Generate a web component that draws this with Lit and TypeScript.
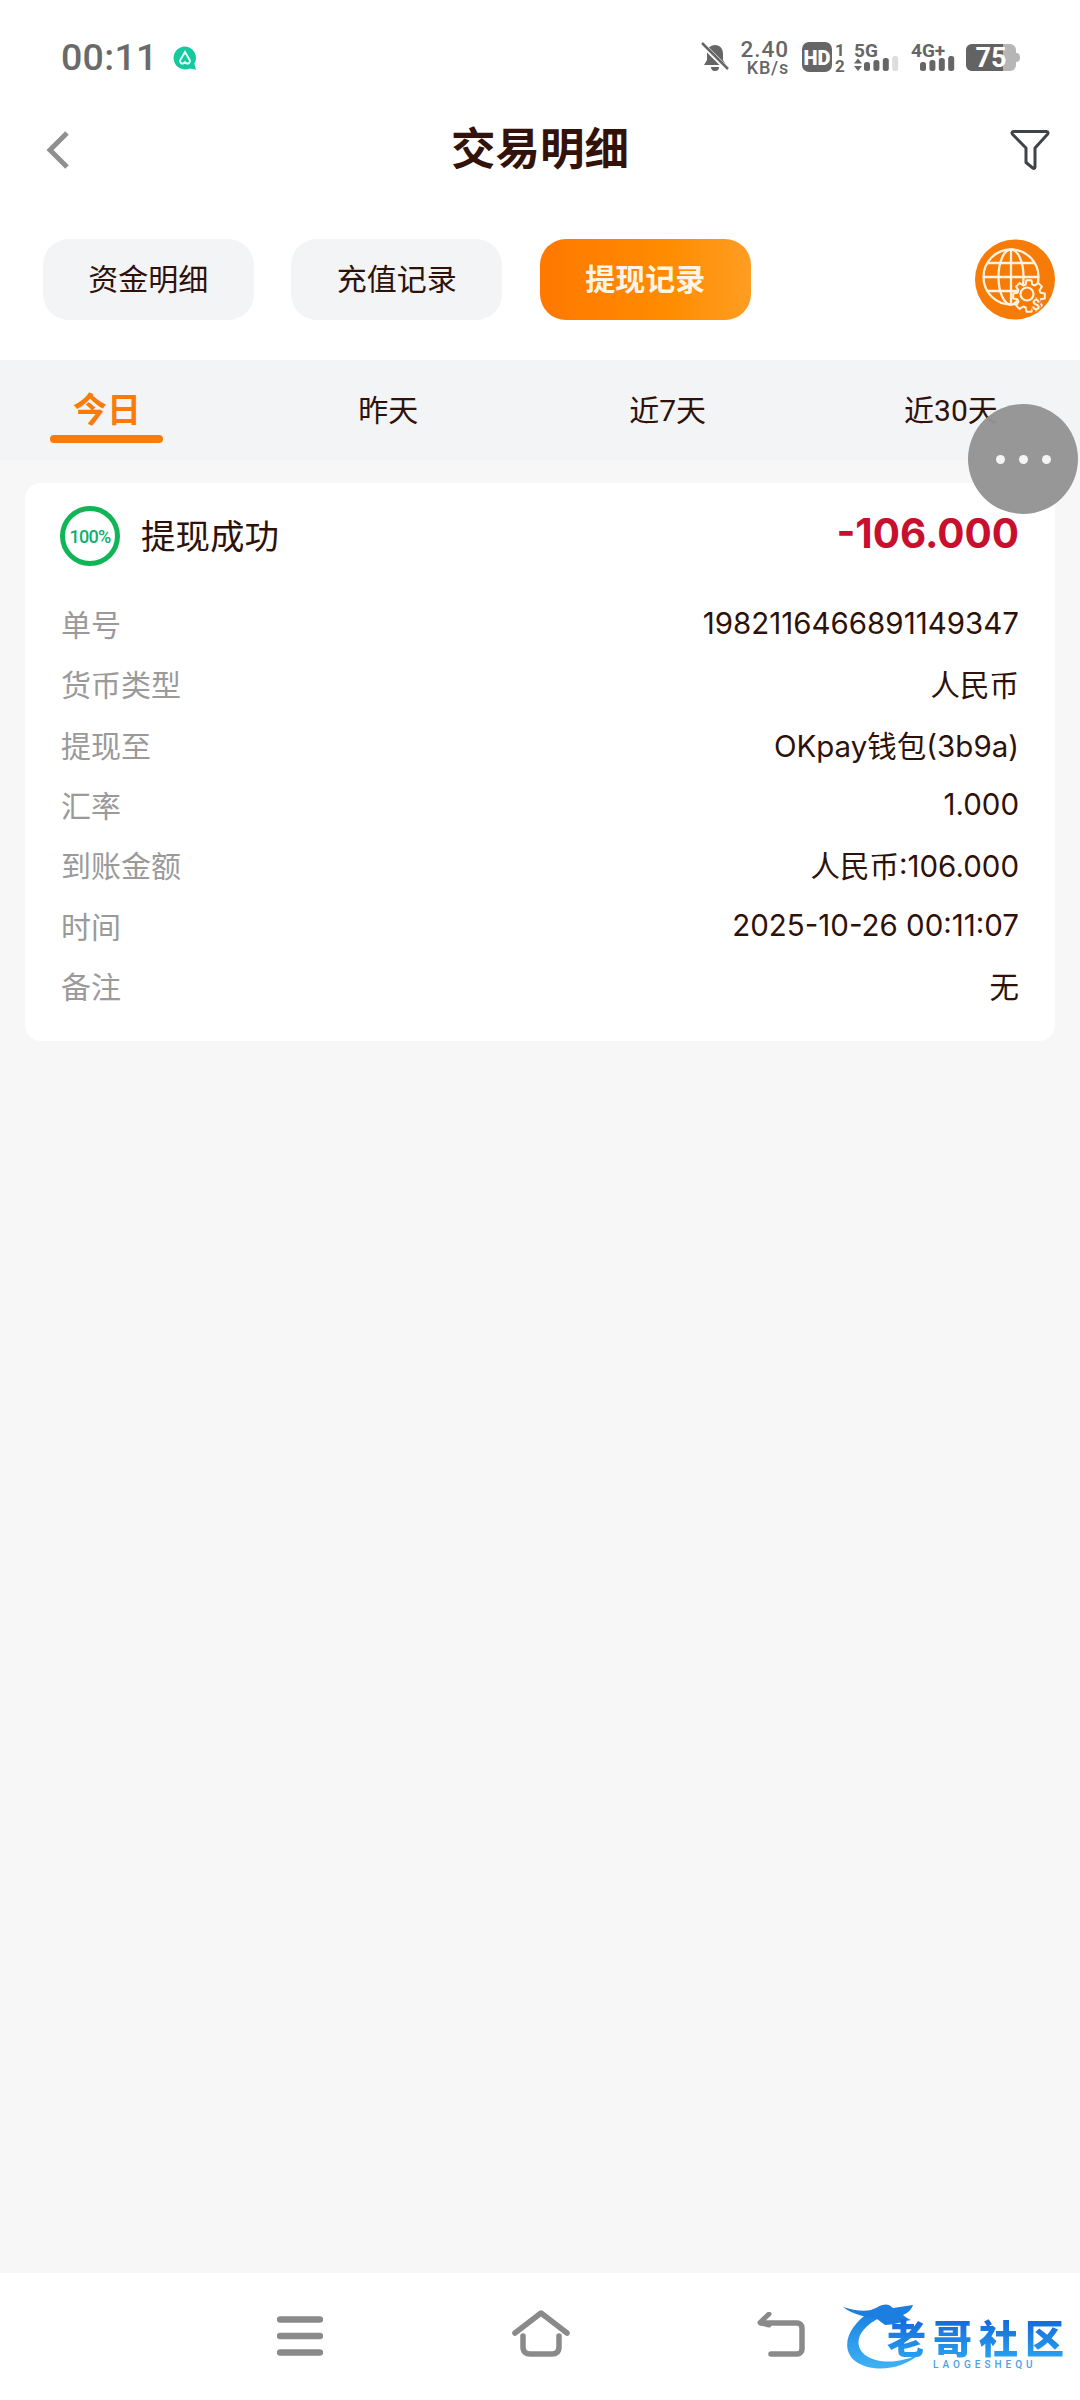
import { LitElement, html, css, svg } from "lit";
import { customElement } from "lit/decorators.js";

const rows: [string, string][] = [
  ["单号", "1982116466891149347"],
  ["货币类型", "人民币"],
  ["提现至", "OKpay钱包(3b9a)"],
  ["汇率", "1.000"],
  ["到账金额", "人民币:106.000"],
  ["时间", "2025-10-26 00:11:07"],
  ["备注", "无"],
];

const bars = (n: number, lit: number) => svg`${Array.from({ length: n }, (_, i) => svg`
  <rect x=${i * 9.400} y=${6 - i * 2} width="6" height=${9 + i * 2} rx="2.500" fill=${i < lit ? "#666" : "#ddd"}></rect>`)}`;

const gear = (cx: number, cy: number, r1: number, r2: number, teeth: number) => {
  const pts: string[] = [];
  for (let i = 0; i < teeth; i++) {
    const a = (i / teeth) * Math.PI * 2;
    const s = (Math.PI * 2) / teeth;
    for (const [o, r] of [[-0.36, r1], [-0.2, r2], [0.2, r2], [0.36, r1]] as [number, number][]) {
      pts.push(`${(cx + r * Math.cos(a + o * s)).toFixed(1)},${(cy + r * Math.sin(a + o * s)).toFixed(1)}`);
    }
  }
  return pts.join(" ");
};

@customElement("app-root")
export class AppRoot extends LitElement {
  static styles = css`
    :host { display: block; width: 1080px; height: 2400px; position: relative; overflow: hidden;
      background: #f7f7f7; color: #2e1209;
      font-family: Roboto, "Noto Sans CJK SC", sans-serif; }
    .page { display: flex; flex-direction: column; height: 2400px; }
    .top { background: #fff; }
    .status { height: 114px; display: flex; align-items: center; padding: 0 60px 0 61px; }
    .time { font-size: 37.5px; font-weight: 500; color: #6a6a6a; letter-spacing: 0.3px; }
    .teal { margin-left: 15px; margin-top: 1px; display: block; }
    .sys { margin-left: auto; display: flex; align-items: center; color: #666; }
    .sys svg { display: block; }
    .speed { display: flex; flex-direction: column; align-items: flex-end; margin: 0 13px 0 11px; font-weight: 500; line-height: 1; }
    .speed b { font-size: 22.5px; font-weight: 500; letter-spacing: 1px; line-height: 20px; }
    .speed i { font-style: normal; font-size: 18px; letter-spacing: 0.8px; line-height: 17px; }
    .sp5 { margin-left: 7px; }
    .sp4 { margin-left: 12px; }
    .spb { margin-left: 9px; }
    .nav { height: 72px; display: flex; align-items: center; justify-content: space-between; padding: 0 30px 0 46px; position: relative; }
    .nav h1 { margin: 0; font-size: 44.5px; font-weight: 700; color: #33120a; position: absolute; left: 0; right: 0; text-align: center; line-height: 74px; }
    .nav svg { display: block; }
    .filter { position: relative; }
    .btns { display: flex; gap: 37.5px; align-items: center; padding: 53px 25px 40px 42.8px; }
    .btn { width: 211px; height: 81px; box-sizing: border-box; padding-bottom: 5px; border-radius: 26px; background: #f3f4f6; display: flex; align-items: center; justify-content: center; font-size: 30px; }
    .btn.on { background: linear-gradient(90deg, #ff7800 0%, #ff8c00 60%, #ff9d22 100%); color: #fff4e6; font-weight: 700; }
    .globe { margin-left: auto; display: block; }
    .tabs { height: 100px; background: #f3f4f6; display: flex; justify-content: space-between; padding: 0 54px 0 32px; }
    .tab { width: 150px; height: 100px; position: relative; text-align: center; font-size: 30px; line-height: 102px; }
    .tab.shift { left: -2px; }
    .tab.on { color: #f97b0a; font-size: 34px; font-weight: 700; line-height: 100px; }
    .tab.on::after { content: ""; position: absolute; left: 18px; width: 113px; top: 75px; height: 8px; border-radius: 4px; background: #f97b0a; }
    .card { margin: 23px 25px 0 25px; background: #fff; border-radius: 16px; padding: 23px 36px 24px 36px; }
    .head { display: flex; align-items: center; height: 60px; margin-bottom: 29px; }
    .ring { width: 60px; height: 60px; box-sizing: border-box; margin-left: -1px; border-radius: 50%; border: 5px solid #10b557; color: #12ae6c; display: flex; align-items: center; justify-content: center; font-size: 18px; font-weight: 500; letter-spacing: -0.7px; }
    .name { margin-left: 21px; font-size: 34.5px; padding-bottom: 5px; }
    .amt { margin-left: auto; font-family: Inter, Roboto, sans-serif; font-size: 40.4px; font-weight: 700; color: #c8102e; padding-bottom: 5px; }
    .row { height: 60.3px; box-sizing: border-box; padding-bottom: 4px; display: flex; align-items: center; justify-content: space-between; font-size: 30px; }
    .row span:first-child { color: #9a9a9a; }
    .row span:last-child { font-family: Inter, "Noto Sans CJK SC", sans-serif; font-size: 29.5px; }
    .spacer { flex: 1; }
    .bottom { height: 127px; background: #fff; display: flex; align-items: center; position: relative; }
    .bottom svg { display: block; position: absolute; }
    .i-menu { left: 277px; top: 43px; }
    .i-home { left: 512px; top: 37px; }
    .i-back { left: 757px; top: 39px; }
    .i-dragon { left: 0; top: 0; }
    .float { position: absolute; left: 968px; top: 404px; width: 110px; height: 110px; border-radius: 50%; background: rgba(148,148,148,.97); display: flex; align-items: center; justify-content: center; gap: 14px; }
    .float i { width: 9px; height: 9px; border-radius: 50%; background: #f4f4f4; display: block; }
    .logo { position: absolute; left: 841px; top: 28px; width: 224px; height: 72px; }
    .lt { position: absolute; left: 46px; top: 16px; font-size: 39px; font-weight: 900; line-height: 46px; letter-spacing: 7px; white-space: nowrap;
      background: linear-gradient(180deg, #1565d8, #2aa8f2); -webkit-background-clip: text; background-clip: text; color: transparent; filter: blur(.6px); }
    .ls { position: absolute; left: 92px; top: 58px; font-size: 10px; line-height: 12px; letter-spacing: 4px; color: #4a9fe6; white-space: nowrap; font-weight: 500; }
  `;

  render() {
    return html`
      <div class="page">
        <div class="top">
          <div class="status">
            <span class="time">00:11</span>
            <svg class="teal" width="24" height="24" viewBox="0 0 24 24">
              <path d="M12 .5a11.500 11.500 0 1 0 5 21.900l6 1.400-1.600-6A11.500 11.500 0 0 0 12 .5z" fill="#12c9a0"></path>
              <path d="M12 6l5 8.500a2.600 2.600 0 0 1-4 2.600l-1-1-1 1a2.600 2.600 0 0 1-4-2.600z" fill="none" stroke="#e8fff8" stroke-width="2"></path>
            </svg>
            <div class="sys">
              <svg width="28" height="30" viewBox="0 0 28 30">
                <path d="M14 3c5 0 8 3.500 8 9v6l3 5H3l3-5v-6c0-5.500 3-9 8-9zM10 25h8a4 4 0 0 1-8 0z" fill="#666"></path>
                <path d="M1 2l26 26" stroke="#fff" stroke-width="5"></path>
                <path d="M1 1l26 26" stroke="#666" stroke-width="2.500"></path>
              </svg>
              <div class="speed"><b>2.40</b><i>KB/s</i></div>
              <svg width="45" height="39" viewBox="0 -4 45 39">
                <rect x="0" y="0" width="30" height="30" rx="7" fill="#666"></rect>
                <text x="15" y="22.500" text-anchor="middle" font-family="Roboto" font-size="20" font-weight="900" fill="#fff">HD</text>
                <text x="38" y="14" text-anchor="middle" font-family="Roboto" font-size="17" font-weight="700" fill="#666">1</text>
                <text x="38" y="30" text-anchor="middle" font-family="Roboto" font-size="17" font-weight="700" fill="#666">2</text>
              </svg>
              <svg class="sp5" width="45" height="38" viewBox="0 -4 45 38">
                <text x="0" y="15" font-family="Roboto" font-size="19" font-weight="700" fill="#666">5G</text>
                <path d="M4 16.500l4 5H0zM0 24h8l-4 5z" fill="#666"></path>
                <g transform="translate(10 14)">${bars(4, 3)}</g>
              </svg>
              <svg class="sp4" width="46" height="38" viewBox="0 -4 46 38">
                <text x="0" y="15" font-family="Roboto" font-size="19" font-weight="700" fill="#666">4G+</text>
                <g transform="translate(9 14)">${bars(4, 4)}</g>
              </svg>
              <svg class="spb" width="54" height="35" viewBox="0 -4 54 35">
                <rect x="0" y="0" width="50" height="27" rx="6" fill="#b6b6b6"></rect>
                <path d="M6 0h31v27H6a6 6 0 0 1-6-6V6a6 6 0 0 1 6-6z" fill="#636363"></path>
                <path d="M50 9c3 0 4 2 4 4.500S53 18 50 18z" fill="#b6b6b6"></path>
                <text x="25" y="23" text-anchor="middle" font-family="Roboto" font-size="27" font-weight="700" fill="#fff">75</text>
              </svg>
            </div>
          </div>
          <div class="nav">
            <svg width="24" height="40" viewBox="0 0 24 40">
              <path d="M21 3L4 20l17 17" fill="none" stroke="#909090" stroke-width="5"></path>
            </svg>
            <h1>交易明细</h1>
            <svg class="filter" width="40" height="42" viewBox="0 0 40 42">
              <path d="M3.500 2.500h33c1.500 0 2 1.500 1 2.700L25 19v19c0 1.500-1.200 1.800-2.200 1L16 33.500V19L2.500 5.200c-1-1.200-.5-2.700 1-2.700z" fill="none" stroke="#3f444a" stroke-width="3" stroke-linejoin="round"></path>
            </svg>
          </div>
          <div class="btns">
            <div class="btn">资金明细</div>
            <div class="btn">充值记录</div>
            <div class="btn on">提现记录</div>
            <svg class="globe" width="80" height="81" viewBox="0 0 80 81">
              <circle cx="40" cy="40.500" r="40" fill="#f77b07"></circle>
              <g fill="none" stroke="#fff3e0" stroke-width="2.300">
                <circle cx="36" cy="38" r="27.500"></circle>
                <ellipse cx="36" cy="38" rx="12.500" ry="27.500"></ellipse>
                <path d="M36 10.500v55M8.500 38h55M12.500 24h47M12.500 52h47"></path>
              </g>
              <polygon points=${gear(54, 57, 12, 16, 8)} fill="#f77b07" stroke="#fff3e0" stroke-width="2" stroke-linejoin="round"></polygon>
              <circle cx="52" cy="55" r="6.500" fill="#f77b07" stroke="#fff3e0" stroke-width="2.200"></circle>
              <path d="M57 60l6 6" stroke="#fff3e0" stroke-width="2"></path>
              <text x="61" y="71" text-anchor="middle" font-family="Roboto" font-size="15" font-weight="700" fill="#fff3e0" stroke="#f77b07" stroke-width="2.500" paint-order="stroke">$</text>
            </svg>
          </div>
        </div>
        <div class="tabs">
          <div class="tab on">今日</div>
          <div class="tab">昨天</div>
          <div class="tab shift">近7天</div>
          <div class="tab">近30天</div>
        </div>
        <div class="card">
          <div class="head">
            <div class="ring">100%</div>
            <div class="name">提现成功</div>
            <div class="amt">-106.000</div>
          </div>
          ${rows.map(([k, v]) => html`<div class="row"><span>${k}</span><span>${v}</span></div>`)}
        </div>
        <div class="spacer"></div>
        <div class="bottom">
          <svg class="i-menu" width="46" height="40" viewBox="0 0 46 40">
            <path d="M3 3.500h40M3 20h40M3 36.500h40" stroke="#8a8a8a" stroke-width="6.500" stroke-linecap="round"></path>
          </svg>
          <svg class="i-home" width="58" height="47" viewBox="0 0 58 47">
            <path d="M3 23L29 3l26 20" fill="none" stroke="#8a8a8a" stroke-width="5.500" stroke-linecap="round" stroke-linejoin="round"></path>
            <path d="M11 26v11c0 5 3 7 7 7h22c4 0 7-2 7-7V26" fill="none" stroke="#8a8a8a" stroke-width="5.500" stroke-linecap="round"></path>
          </svg>
          <svg class="i-back" width="48" height="45" viewBox="0 0 48 45">
            <path d="M12 2L3 10.500l9 2.500" fill="none" stroke="#8a8a8a" stroke-width="5" stroke-linecap="round" stroke-linejoin="round"></path>
            <path d="M4 11h36c3 0 5 2 5 5v21c0 3-2 5-5 5H14" fill="none" stroke="#8a8a8a" stroke-width="5.500" stroke-linecap="round"></path>
          </svg>
          <div class="logo">
            <svg class="i-dragon" width="110" height="72" viewBox="0 0 110 72">
              <defs>
                <linearGradient id="d" x1="0" y1="0" x2="0" y2="1"><stop offset="0" stop-color="#1a7fe0"></stop><stop offset="1" stop-color="#3fb2f5"></stop></linearGradient>
              </defs>
              <path d="M30 10C8 24-2 46 14 60c16 12 46 10 66-8C62 62 38 64 24 54 12 44 16 28 40 16z" fill="url(#d)"></path>
              <path d="M2 6c10 3 20 5 28 3 8-3 12-7 18-5l4 3 20-3c-2 6-6 8-10 10 2 2 4 3 8 5-10 2-18 5-26 5l-8-6C26 16 12 14 2 6z" fill="#1a7fe0"></path>
            </svg>
            <div class="lt">老哥社区</div>
            <div class="ls">LAOGESHEQU</div>
          </div>
        </div>
      </div>
      <div class="float"><i></i><i></i><i></i></div>
    `;
  }
}
